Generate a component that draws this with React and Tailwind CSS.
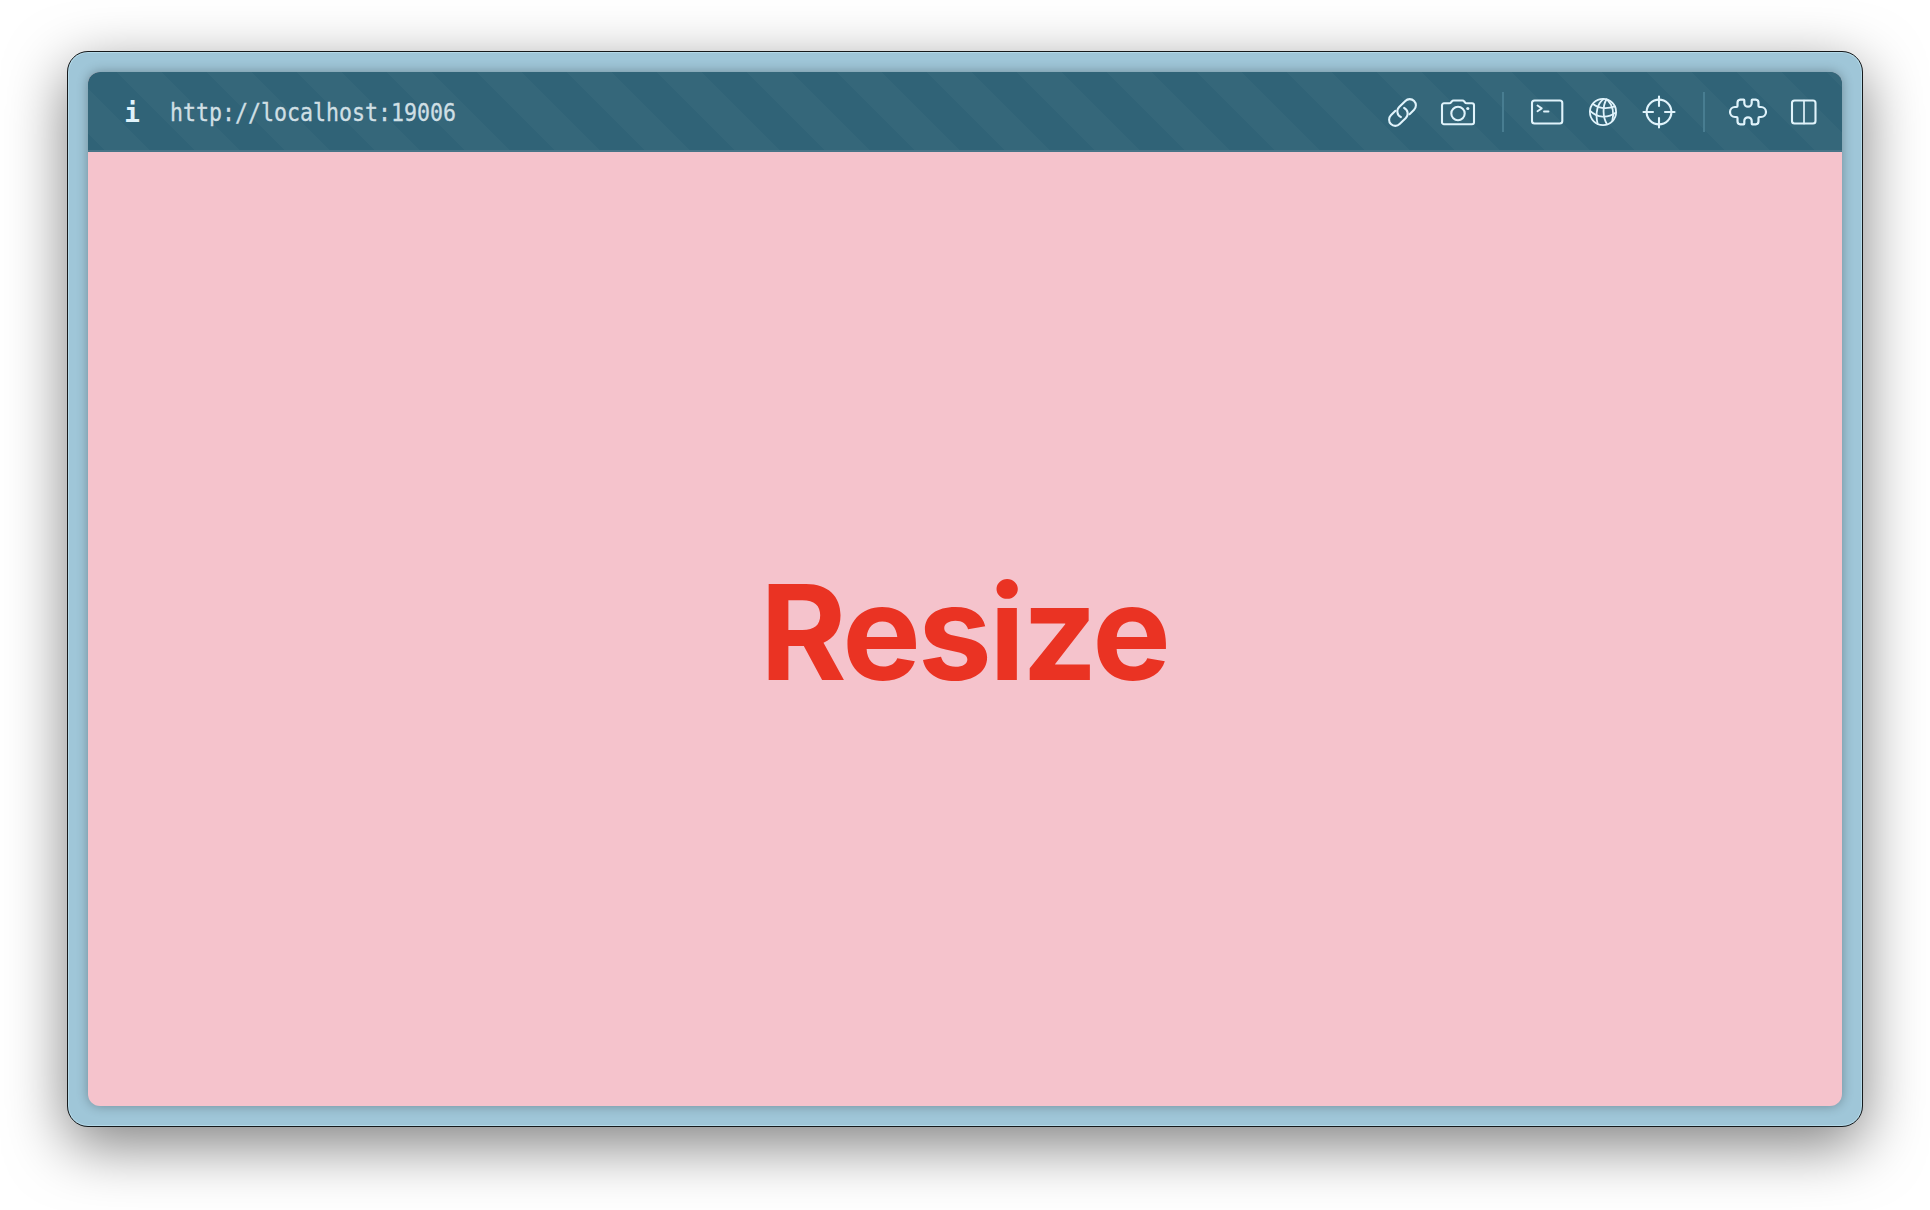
const stroke = {
  fill: 'none',
  stroke: 'currentColor',
  strokeWidth: 2.1,
  strokeLinecap: 'round',
  strokeLinejoin: 'round',
};

function LinkIcon() {
  return (
    <svg width="33" height="33" viewBox="0 0 24 24" {...stroke} strokeWidth="1.5">
      <path d="M13.19 8.688a4.5 4.5 0 0 1 1.242 7.244l-4.5 4.5a4.5 4.5 0 0 1-6.364-6.364l3.3-3.3" />
      <path d="M17.132 13.232l3.3-3.3a4.5 4.5 0 0 0-6.364-6.364l-4.5 4.5a4.5 4.5 0 0 0 1.242 7.244" />
    </svg>
  );
}

function CameraIcon() {
  return (
    <svg width="36" height="28" viewBox="0 0 36 28" {...stroke}>
      <path d="M4 5.3h5.2c1 0 1.4-.3 1.9-1l.6-.8c.5-.7 1-1 1.9-1h8.8c.9 0 1.4.3 1.9 1l.6.8c.5.7.9 1 1.9 1H32a2 2 0 0 1 2 2V24.200a2 2 0 0 1-2 2H4a2 2 0 0 1-2-2V7.300a2 2 0 0 1 2-2Z" />
      <circle cx="18" cy="15.5" r="6.7" />
      <circle cx="27.8" cy="10.5" r="1.6" fill="currentColor" stroke="none" />
    </svg>
  );
}

function TerminalIcon() {
  return (
    <svg width="34" height="28" viewBox="0 0 34 28" {...stroke}>
      <rect x="2" y="2.5" width="30.3" height="23" rx="2.5" />
      <path d="m7.5 7.5 4.2 2.9L7.5 13.200M14 13.500h4.500" strokeWidth="1.9" />
    </svg>
  );
}

function GlobeIcon() {
  return (
    <svg width="30" height="30" viewBox="0 0 30 30" {...stroke} strokeWidth="1.8">
      <circle cx="15" cy="15" r="13.1" />
      <path d="M15.500 2C9.500 6.500 7 16 9.600 26.800M18.500 2.300C14.500 9 14.500 20 19 27.300M19.500 2.800C24.500 8 26.300 15.500 24.300 24" />
      <path d="M5 7C11 11.500 19 12.200 27 9.400M2.200 13.800C9 20.800 19.500 21.500 28 15.500" />
    </svg>
  );
}

function TargetIcon() {
  return (
    <svg width="34" height="34" viewBox="0 0 34 34" {...stroke}>
      <circle cx="17" cy="17" r="12.4" />
      <path d="M17 1.500v9.500M17 23v9.500M1.500 17H11M23 17h9.500" />
    </svg>
  );
}

function PuzzleIcon() {
  return (
    <svg width="40" height="28" viewBox="0 0 40 28" {...stroke} strokeWidth="2.2">
      <path d="M12.300 1.700H15.600Q16.300 1.700 16.300 2.500V5a3.700 3.700 0 0 0 7.400 0V2.500Q23.700 1.700 24.400 1.700H27.700Q30.500 2 30.500 4.800V8Q30.500 9 31.500 9H33a5 5 0 0 1 0 10H31.500Q30.500 19 30.500 20V23.200Q30.500 26 27.700 26.300H24.400Q23.700 26.300 23.700 25.500V23a3.700 3.700 0 0 0-7.400 0V25.500Q16.300 26.300 15.600 26.300H12.300Q9.500 26 9.500 23.200V20Q9.500 19 8.500 19H7a5 5 0 0 1 0-10H8.500Q9.500 9 9.500 8V4.800Q9.500 2 12.300 1.700Z" />
    </svg>
  );
}

function SplitIcon() {
  return (
    <svg width="28" height="28" viewBox="0 0 28 28" {...stroke}>
      <rect x="2" y="2.5" width="23.5" height="23" rx="2.5" />
      <path d="M14 2.500v23" strokeWidth="1.7" />
    </svg>
  );
}

function Tool({ label, children }) {
  return (
    <button aria-label={label} className="flex h-14 w-14 items-center justify-center">
      {children}
    </button>
  );
}

function Divider() {
  return (
    <div className="flex w-[33px] justify-center">
      <div className="h-10 w-[2px] bg-[#487d91]" />
    </div>
  );
}

function Toolbar() {
  return (
    <header className="flex h-20 shrink-0 items-center border-b-2 border-[#487487] bg-[#306377] bg-[linear-gradient(45deg,#35677a_25%,transparent_25%,transparent_50%,#35677a_50%,#35677a_75%,transparent_75%)] bg-[length:90px_90px] bg-[position:29px_0px] pt-[2px] pr-[10px] text-[#e0f3fb]">
      <button aria-label="Site information" className="ml-[34px] flex w-5 justify-center pt-px font-['DejaVu_Sans_Mono',monospace] text-[26px] leading-8 font-bold">
        i
      </button>
      <div className="ml-7 origin-center scale-y-[1.12] pt-px font-['DejaVu_Sans_Mono',monospace] text-[21.6px] leading-8 text-[#cfdfe4] [-webkit-text-stroke:0.3px_#cfdfe4]">
        http://localhost:19006
      </div>
      <div className="ml-auto flex items-center">
        <Tool label="Copy link"><LinkIcon /></Tool>
        <Tool label="Screenshot"><CameraIcon /></Tool>
        <Divider />
        <Tool label="Console"><TerminalIcon /></Tool>
        <Tool label="Network"><GlobeIcon /></Tool>
        <Tool label="Inspect"><TargetIcon /></Tool>
        <Divider />
        <Tool label="Extensions"><PuzzleIcon /></Tool>
        <Tool label="Split view"><SplitIcon /></Tool>
      </div>
    </header>
  );
}

export default function App() {
  return (
    <div className="h-[1210px] w-[1930px] overflow-hidden bg-white pt-[51px] pl-[67px]">
      <div className="h-[1076px] w-[1796px] rounded-[21px] border border-[#15191b] bg-[#9fc6d8] p-5 shadow-[0_18px_60px_rgba(0,0,0,0.5),inset_0_0_0_1px_#b4d9e8]">
        <div className="flex h-[1034px] w-[1754px] flex-col overflow-hidden rounded-xl bg-[#f5c3cc] shadow-[0_0_12px_rgba(0,0,0,0.3)]">
          <Toolbar />
          <main className="flex flex-1 items-center justify-center pt-1.5 pr-[2px]">
            <h1 className="font-['Inter',sans-serif] text-[132px] leading-none font-bold tracking-[-2.8px] text-[#ea3323]">
              Resize
            </h1>
          </main>
        </div>
      </div>
    </div>
  );
}
